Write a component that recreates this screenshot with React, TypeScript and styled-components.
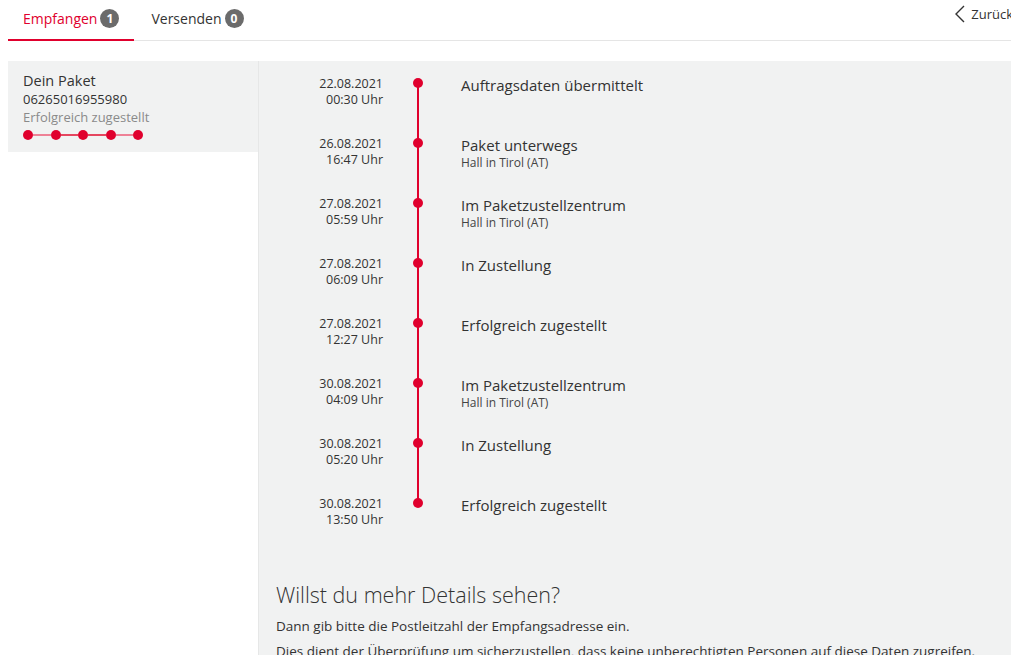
import React from "react";
import styled, {createGlobalStyle} from "styled-components";

const GlobalStyle = createGlobalStyle`
  html, body {
    overflow: hidden;
  }
  body {
    margin: 0 0 0 8px;
    font-family: "Open Sans", "Liberation Sans", sans-serif;
    color: #333333;
    background: #ffffff;
  }
`;

const RED = "#e0002d";

const Page = styled.div`
  width: 1005px;
`;

const TabBar = styled.header`
  display: flex;
  align-items: stretch;
  height: 40px;
  border-bottom: 1px solid #e5e5e5;
  margin-right: -20px;
`;

const Tab = styled.div<{ $active?: boolean }>`
  display: inline-flex;
  align-items: center;
  gap: 3px;
  padding: 0 15px 2px;
  font-size: 14px;
  color: ${p => (p.$active ? RED : "#333333")};
  border-bottom: 2px solid ${p => (p.$active ? RED : "transparent")};
  margin-bottom: -1px;
  cursor: pointer;
  & + & {
    padding-left: 17px;
  }
`;

const Badge = styled.span`
  display: inline-flex;
  align-items: center;
  justify-content: center;
  width: 19px;
  height: 19px;
  border-radius: 50%;
  background: #6b6b6b;
  color: #ffffff;
  font-size: 12px;
  font-weight: 700;
`;

const BackLink = styled.a`
  margin-left: auto;
  margin-right: 20px;
  margin-top: 5px;
  display: inline-flex;
  align-items: flex-start;
  gap: 5px;
  font-size: 13px;
  color: #333333;
  text-decoration: none;
  white-space: nowrap;
  span {
    line-height: 18px;
  }
`;

const Main = styled.div`
  display: flex;
  margin-top: 20px;
  margin-right: -20px;
`;

const Sidebar = styled.aside`
  width: 251px;
  flex-shrink: 0;
`;

const ParcelCard = styled.div`
  background: #f1f2f2;
  height: 91px;
  box-sizing: border-box;
  padding: 11px 15px 0;
`;

const CardTitle = styled.div`
  font-size: 14.5px;
  line-height: 18px;
  color: #333333;
`;

const CardNumber = styled.div`
  font-size: 13px;
  line-height: 18px;
  color: #333333;
`;

const CardStatus = styled.div`
  font-size: 13px;
  line-height: 18px;
  color: #8a8a8a;
`;

const Progress = styled.div`
  display: flex;
  align-items: center;
  margin-top: 4px;
`;

const ProgressDot = styled.span`
  width: 10px;
  height: 10px;
  border-radius: 50%;
  background: ${RED};
  flex-shrink: 0;
`;

const ProgressLine = styled.span<{ $light?: boolean }>`
  width: 17.5px;
  height: 2px;
  background: ${p => (p.$light ? "#ee8196" : "#e5465f")};
`;

const Content = styled.section`
  flex: 1;
  background: #f1f2f2;
  min-height: 700px;
  box-shadow: -1px 0 0 #e6e7e7;
  padding: 15px 0 0 17px;
`;

const Timeline = styled.div`
  display: flex;
  flex-direction: column;
  margin-left: -17px;
`;

const Row = styled.div`
  display: grid;
  grid-template-columns: 124px 70px 1fr;
  height: 60px;
`;

const DateCell = styled.div`
  text-align: right;
  font-size: 12.5px;
  line-height: 16px;
  color: #333333;
`;

const Marker = styled.div<{ $first?: boolean; $last?: boolean }>`
  position: relative;
  &::before {
    content: "";
    display: ${p => (p.$first ? "none" : "block")};
    position: absolute;
    left: 34px;
    top: 0;
    height: 7px;
    width: 2px;
    background: ${RED};
  }
  &::after {
    content: "";
    display: ${p => (p.$last ? "none" : "block")};
    position: absolute;
    left: 34px;
    top: 7px;
    bottom: 0;
    width: 2px;
    background: ${RED};
  }
`;

const Dot = styled.span`
  position: absolute;
  left: 30px;
  top: 2px;
  width: 10px;
  height: 10px;
  border-radius: 50%;
  background: ${RED};
  z-index: 1;
`;

const EventCell = styled.div`
  padding-left: 8px;
`;

const EventTitle = styled.div`
  font-size: 15px;
  line-height: 18px;
  color: #333333;
`;

const EventPlace = styled.div`
  font-size: 12px;
  line-height: 18px;
  color: #444444;
`;

const Heading = styled.h2`
  margin: 26px 0 0;
  font-size: 21.5px;
  line-height: 26px;
  font-weight: 300;
  color: #333333;
`;

const Paragraph = styled.p`
  margin: 9px 0 0;
  font-size: 13.5px;
  line-height: 18px;
  color: #333333;
  white-space: nowrap;
  & + & {
    margin-top: 7px;
  }
`;

type Event = { date: string; time: string; title: string; place?: string };

const events: Event[] = [
  {date: "22.08.2021", time: "00:30 Uhr", title: "Auftragsdaten übermittelt"},
  {date: "26.08.2021", time: "16:47 Uhr", title: "Paket unterwegs", place: "Hall in Tirol (AT)"},
  {date: "27.08.2021", time: "05:59 Uhr", title: "Im Paketzustellzentrum", place: "Hall in Tirol (AT)"},
  {date: "27.08.2021", time: "06:09 Uhr", title: "In Zustellung"},
  {date: "27.08.2021", time: "12:27 Uhr", title: "Erfolgreich zugestellt"},
  {date: "30.08.2021", time: "04:09 Uhr", title: "Im Paketzustellzentrum", place: "Hall in Tirol (AT)"},
  {date: "30.08.2021", time: "05:20 Uhr", title: "In Zustellung"},
  {date: "30.08.2021", time: "13:50 Uhr", title: "Erfolgreich zugestellt"},
];

export default function App() {
  return (
    <Page>
      <GlobalStyle/>
      <TabBar>
        <Tab $active>Empfangen <Badge>1</Badge></Tab>
        <Tab>Versenden <Badge>0</Badge></Tab>
        <BackLink href="#">
          <svg width="12" height="18" viewBox="0 0 12 18">
            <path d="M10 1 L2 9 L10 17" fill="none" stroke="#333" strokeWidth="1.4"/>
          </svg>
          <span>Zurück</span>
        </BackLink>
      </TabBar>
      <Main>
        <Sidebar>
          <ParcelCard>
            <CardTitle>Dein Paket</CardTitle>
            <CardNumber>06265016955980</CardNumber>
            <CardStatus>Erfolgreich zugestellt</CardStatus>
            <Progress>
              <ProgressDot/><ProgressLine $light/>
              <ProgressDot/><ProgressLine/>
              <ProgressDot/><ProgressLine/>
              <ProgressDot/><ProgressLine $light/>
              <ProgressDot/>
            </Progress>
          </ParcelCard>
        </Sidebar>
        <Content>
          <Timeline>
            {events.map((e, i) => (
              <Row key={i}>
                <DateCell>{e.date}<br/>{e.time}</DateCell>
                <Marker $first={i === 0} $last={i === events.length - 1}><Dot/></Marker>
                <EventCell>
                  <EventTitle>{e.title}</EventTitle>
                  {e.place && <EventPlace>{e.place}</EventPlace>}
                </EventCell>
              </Row>
            ))}
          </Timeline>
          <Heading>Willst du mehr Details sehen?</Heading>
          <Paragraph>Dann gib bitte die Postleitzahl der Empfangsadresse ein.</Paragraph>
          <Paragraph>Dies dient der Überprüfung um sicherzustellen, dass keine unberechtigten Personen auf diese Daten zugreifen.</Paragraph>
        </Content>
      </Main>
    </Page>
  );
}
